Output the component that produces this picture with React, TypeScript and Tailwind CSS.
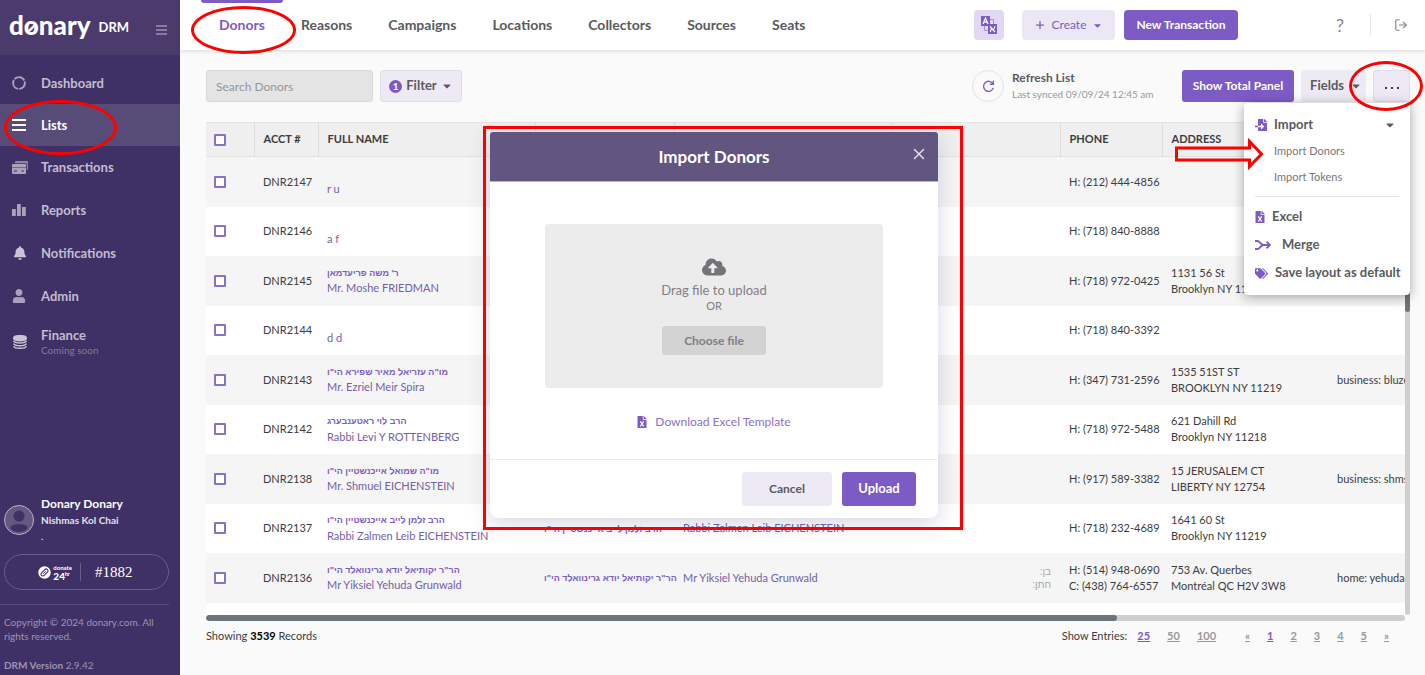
import React from "react";
import {
  FaBell,
  FaCaretDown,
  FaCloudUploadAlt,
  FaDatabase,
  FaFileExcel,
  FaFileImport,
  FaTags,
  FaUser,
} from "react-icons/fa";
import { LogOut, Plus, X } from "lucide-react";

type Donor = {
  id: string;
  hebrew?: string;
  name: string;
  splitName?: boolean;
  relations?: string[];
  phones: string[];
  address?: string[];
  email?: string;
};

const donors: Donor[] = [
  { id: "DNR2147", name: "r u", phones: ["H: (212) 444-4856"] },
  { id: "DNR2146", name: "a f", phones: ["H: (718) 840-8888"] },
  {
    id: "DNR2145",
    hebrew: "ר' משה פריעדמאן",
    name: "Mr. Moshe FRIEDMAN",
    phones: ["H: (718) 972-0425"],
    address: ["1131 56 St", "Brooklyn NY 11219"],
  },
  { id: "DNR2144", name: "d d", phones: ["H: (718) 840-3392"] },
  {
    id: "DNR2143",
    hebrew: "מו\"ה עזריאל מאיר שפירא הי\"ו",
    name: "Mr. Ezriel Meir Spira",
    phones: ["H: (347) 731-2596"],
    address: ["1535 51ST ST", "BROOKLYN NY 11219"],
    email: "business: bluzer@donary.com",
  },
  {
    id: "DNR2142",
    hebrew: "הרב לוי ראטענבערג",
    name: "Rabbi Levi Y ROTTENBERG",
    phones: ["H: (718) 972-5488"],
    address: ["621 Dahill Rd", "Brooklyn NY 11218"],
  },
  {
    id: "DNR2138",
    hebrew: "מו\"ה שמואל אייכנשטיין הי\"ו",
    name: "Mr. Shmuel EICHENSTEIN",
    phones: ["H: (917) 589-3382"],
    address: ["15 JERUSALEM CT", "LIBERTY NY 12754"],
    email: "business: shmself@donary.com",
  },
  {
    id: "DNR2137",
    hebrew: "הרב זלמן לייב אייכנשטיין הי\"ו",
    name: "Rabbi Zalmen Leib EICHENSTEIN",
    splitName: true,
    phones: ["H: (718) 232-4689"],
    address: ["1641 60 St", "Brooklyn NY 11219"],
  },
  {
    id: "DNR2136",
    hebrew: "הר\"ר יקותיאל יודא גרינוואלד הי\"ו",
    name: "Mr Yiksiel Yehuda Grunwald",
    splitName: true,
    relations: ["בן:", "חתן:"],
    phones: ["H: (514) 948-0690", "C: (438) 764-6557"],
    address: ["753 Av. Querbes", "Montréal QC H2V 3W8"],
    email: "home: yehuda@donary.com",
  },
];

const tabs = ["Donors", "Reasons", "Campaigns", "Locations", "Collectors", "Sources", "Seats"];

function DashboardIcon() {
  return (
    <svg viewBox="0 0 14 14" className="size-[14px]" fill="none" stroke="currentColor" strokeWidth="1.900">
      <circle cx="7" cy="7" r="5.900" strokeDasharray="11.300 1.057" strokeDashoffset="2.500" />
    </svg>
  );
}

function CardsIcon() {
  return (
    <svg viewBox="0 0 16 13" className="h-[13px] w-4" fill="currentColor">
      <path d="M4 0h11a1 1 0 0 1 1 1v8h-1.200V3.200a1 1 0 0 0-1-1H3V1a1 1 0 0 1 1-1z" opacity=".75" />
      <path d="M1 3h12a1 1 0 0 1 1 1v8a1 1 0 0 1-1 1H1a1 1 0 0 1-1-1V4a1 1 0 0 1 1-1z" />
      <path d="M0 6.500h14" stroke="#3f3065" strokeWidth=".5" />
      <path d="M2 10h3M9.500 10h2.500" stroke="#3f3065" strokeWidth="1" />
    </svg>
  );
}

function BarsChartIcon() {
  return (
    <svg viewBox="0 0 14 12" className="h-3 w-[14px]" fill="currentColor">
      <rect x="0" y="5" width="3.800" height="7" />
      <rect x="5" y="0" width="3.800" height="12" />
      <rect x="10" y="3" width="3.800" height="9" />
    </svg>
  );
}

function DatabaseIcon() {
  return (
    <svg viewBox="0 0 14 14" className="ml-px size-[14px] text-[#c9c4d6]" fill="none" stroke="currentColor" strokeWidth="1.500">
      <ellipse cx="7" cy="3.200" rx="6.300" ry="2.500" fill="currentColor" />
      <path d="M.7 5.800c1 3 11.600 3 12.600 0M.7 8.500c1 3 11.600 3 12.600 0M.7 11.200c1 2.700 11.600 2.700 12.600 0" />
    </svg>
  );
}

function MergeIcon() {
  return (
    <svg viewBox="0 0 16 10" className="h-[10px] w-4" fill="none" stroke="currentColor" strokeWidth="1.900">
      <path d="M0 1h2.500C5 1 5.500 5 8.500 5H15M0 9h2.500C5 9 5.500 5 8.500 5" />
      <path d="M11.500 1.600 15 5l-3.500 3.400" />
    </svg>
  );
}

function LanguageIcon() {
  return (
    <svg viewBox="0 0 16 18" className="h-[18px] w-4">
      <rect width="9" height="10" fill="#7c5cc4" />
      <rect x="7" y="8" width="9" height="10" fill="#7c5cc4" />
      <path d="M9 3.500h3.500V8M7 14.500H3.500V10" fill="none" stroke="#a78fdc" strokeWidth="1" />
      <path d="M2 8 4.500 2 7 8M3 6.200h3" fill="none" stroke="#fff" strokeWidth="1.200" />
      <path
        d="M9 10.500l5 5.500M13.800 10.300c0 1.700-.4 2.300-1.300 2.900M9.400 16c0-2 .3-2.500 1.400-3.300"
        fill="none"
        stroke="#fff"
        strokeWidth="1.200"
      />
    </svg>
  );
}

function RefreshIcon() {
  return (
    <svg viewBox="0 0 14 14" className="size-[13px]" fill="none" stroke="#7c5cc4" strokeWidth="1.500">
      <path d="M11.800 4.200A5.400 5.400 0 1 0 12.200 8.500" />
      <path d="M12.200.8v3.700H8.500" />
    </svg>
  );
}

function CoinMark() {
  return (
    <svg viewBox="0 0 14 14" className="size-[13px]">
      <circle cx="7" cy="7" r="6.700" fill="#fff" />
      <rect
        x="2.500"
        y="5"
        width="9"
        height="4"
        rx="2"
        transform="rotate(-45 7 7)"
        fill="none"
        stroke="#3f3065"
        strokeWidth="1.200"
      />
      <path d="M5.500 8.500l3-3" stroke="#3f3065" strokeWidth="1" />
    </svg>
  );
}

function NavItem({
  icon,
  label,
  note,
  active,
}: {
  icon: React.ReactNode;
  label: string;
  note?: string;
  active?: boolean;
}) {
  return (
    <a
      href="#"
      className={
        active
          ? "flex h-[42px] items-center bg-[#574b78] px-3 text-white"
          : "flex h-[42px] items-center px-3 text-[#c3bdd1]"
      }
    >
      <span className={active ? "flex w-[29px] items-center" : "flex w-[29px] items-center text-[#aaa2bd]"}>{icon}</span>
      <span className="text-[13px] leading-4 font-bold">
        {label}
        {note && <span className="block text-[10px] leading-[14px] font-normal text-[#8379a0]">{note}</span>}
      </span>
    </a>
  );
}

function Sidebar() {
  return (
    <aside className="flex w-[180px] shrink-0 flex-col bg-[#3f3065]">
      <div className="flex h-[55px] items-center bg-[#4b3b6d] px-[9px] text-white">
        <span className="relative pb-[5px] text-[26px] leading-8 font-black">
          donary
          <svg viewBox="0 0 10 10" className="absolute top-[14px] left-[19px] size-[9px]" fill="none" stroke="#fff">
            <path d="M1 9 9 1" strokeWidth="2.500" />
          </svg>
        </span>
        <span className="ml-2 text-[13px] font-bold">DRM</span>
        <button aria-label="Collapse menu" className="ml-auto mr-1 text-[#9b92ae]">
          <svg viewBox="0 0 11 10" className="mt-1 h-[10px] w-[11px]" stroke="currentColor" strokeWidth="1.500">
            <path d="M0 1h11M0 5h11M0 9h11" />
          </svg>
        </button>
      </div>
      <nav className="flex flex-col pt-[7px]">
        <NavItem icon={<DashboardIcon />} label="Dashboard" />
        <NavItem
          icon={
            <svg viewBox="0 0 14 12" className="h-3 w-[14px]" stroke="currentColor" strokeWidth="2">
              <path d="M0 1h14M0 6h14M0 11h14" />
            </svg>
          }
          label="Lists"
          active
        />
        <div className="flex flex-col gap-px">
          <NavItem icon={<CardsIcon />} label="Transactions" />
          <NavItem icon={<BarsChartIcon />} label="Reports" />
          <NavItem icon={<FaBell className="ml-px size-[14px] text-[#c9c4d6]" />} label="Notifications" />
          <NavItem icon={<FaUser className="size-[14px]" />} label="Admin" />
        </div>
        <div className="pt-1">
          <NavItem icon={<DatabaseIcon />} label="Finance" note="Coming soon" />
        </div>
      </nav>
      <div className="mt-auto px-1 pb-[3px]">
        <div className="flex items-center gap-[7px]">
          <span className="relative flex size-[30px] shrink-0 items-center justify-center overflow-hidden rounded-full border border-[#b9b3c8] bg-[#65577f] text-[#3f3065]">
            <svg viewBox="0 0 28 28" className="size-7" fill="currentColor">
              <circle cx="14" cy="10" r="5.500" />
              <path d="M5.500 22c0-3 4-3.800 8.500-3.800s8.500.8 8.500 3.800c-2 3-5 4-8.500 4s-6.500-1-8.500-4z" />
            </svg>
          </span>
          <div className="text-white">
            <p className="text-[12px] leading-4 font-bold">Donary Donary</p>
            <p className="text-[10px] leading-4 font-bold text-[#e4e0ec]">Nishmas Kol Chai</p>
            <p className="text-[10px] leading-4">.</p>
          </div>
        </div>
        <div className="mt-2.5 mr-[7px] flex h-9 items-center rounded-full border border-[#6a5d88] text-white">
          <span className="flex w-[75px] items-center justify-end gap-0.5 pr-2">
            <CoinMark />
            <span className="flex flex-col">
              <span className="text-[6px] leading-[7px] font-bold">donate</span>
              <span className="flex items-start text-[10px] leading-[10px] font-black">
                24<span className="text-[5px] leading-[7px]">hr</span>
              </span>
            </span>
          </span>
          <span className="h-[18px] w-px bg-[#6a5d88]" />
          <span className="pl-3.5 font-['Liberation_Serif',serif] text-[15px]">#1882</span>
        </div>
        <div className="mt-3.5 -ml-1 mr-[7px] border-t border-[#594b78]" />
        <p className="mt-2.5 text-[10px] leading-[14px] text-[#9d94b3]">
          Copyright © 2024 donary.com. All
          <br />
          rights reserved.
        </p>
        <p className="mt-[15px] text-[10px] leading-[14px] text-[#9d94b3]">
          <b>DRM Version</b> 2.9.42
        </p>
      </div>
    </aside>
  );
}

function TopBar() {
  return (
    <header className="flex h-[50px] items-center bg-white pr-[17px] pl-[21px] shadow-[0_1px_4px_rgba(0,0,0,0.14)]">
      <nav className="flex self-stretch">
        {tabs.map((tab, i) => (
          <a
            key={tab}
            href="#"
            className={
              i === 0
                ? "relative flex items-center px-[18px] pb-0.5 text-[14px] font-bold text-[#7c5cc4] before:absolute before:inset-x-0 before:top-0 before:h-[3px] before:rounded-b-sm before:bg-[#7c5cc4]"
                : "flex items-center px-[18px] pb-0.5 text-[14px] font-bold text-[#5a5a60]"
            }
          >
            {tab}
          </a>
        ))}
      </nav>
      <div className="ml-auto flex items-center">
        <button aria-label="Switch language" className="flex size-[30px] items-center justify-center rounded-sm bg-[#e1d8f6]">
          <LanguageIcon />
        </button>
        <button className="ml-[18px] flex h-[30px] w-[93px] items-center justify-center gap-1.5 rounded-sm bg-[#ebe7f4] text-[12px] text-[#7c5cc4]">
          <Plus className="size-3" strokeWidth={2.5} />
          Create
          <FaCaretDown className="size-[11px]" />
        </button>
        <button className="ml-[9px] h-[30px] w-[114px] rounded-sm bg-[#7c5cc4] text-[12px] font-bold text-white">
          New Transaction
        </button>
        <button aria-label="Help" className="ml-[97px] w-[10px] text-[18px] text-[#86868c]">
          ?
        </button>
        <span className="ml-[25px] h-[22px] w-px bg-[#e6e6e6]" />
        <button aria-label="Log out" className="ml-[23px] text-[#86868c]">
          <LogOut className="size-[14px]" strokeWidth={2} />
        </button>
      </div>
    </header>
  );
}

function ActionsMenu() {
  return (
    <div className="absolute top-full right-0 z-20 mt-px w-[166px] rounded-[4px] bg-white px-[11px] py-2 text-[13px] font-bold text-[#5a5a60] shadow-[0_2px_12px_rgba(0,0,0,0.35)]">
      <button className="flex h-[27px] w-full items-center">
        <FaFileImport className="size-3 text-[#7c5cc4]" />
        <span className="ml-[7px]">Import</span>
        <FaCaretDown className="mr-[3px] ml-auto size-3" />
      </button>
      <div className="mb-1.5 border-b border-[#e4e4e4] pb-1.5">
        <a href="#" className="block pl-[19px] text-[11px] leading-[26px] font-normal text-[#77777d]">
          Import Donors
        </a>
        <a href="#" className="block pl-[19px] text-[11px] leading-[26px] font-normal text-[#77777d]">
          Import Tokens
        </a>
      </div>
      <button className="flex h-7 w-full items-center gap-[7px]">
        <FaFileExcel className="h-3 w-[10px] text-[#7c5cc4]" />
        Excel
      </button>
      <button className="flex h-7 w-full items-center gap-[11px] text-left">
        <span className="text-[#7c5cc4]">
          <MergeIcon />
        </span>
        Merge
      </button>
      <button className="flex h-7 w-full items-center gap-[7px] whitespace-nowrap">
        <FaTags className="size-[13px] shrink-0 text-[#7c5cc4]" />
        Save layout as default
      </button>
    </div>
  );
}

function Toolbar() {
  return (
    <div className="flex h-8 items-center">
      <input
        type="text"
        aria-label="Search Donors"
        placeholder="Search Donors"
        className="h-8 w-[167px] rounded-[3px] border border-[#d9d9d9] bg-[#e4e4e4] px-[9px] text-[12px] placeholder:text-[#96969b]"
      />
      <button className="ml-[7px] flex h-8 w-[82px] items-center justify-center rounded-[3px] border border-[#e0dde6] bg-[#ede9f5] text-[13px] font-bold text-[#5a5a60]">
        <span className="mr-1 flex size-[13px] items-center justify-center rounded-full bg-[#7c5cc4] text-[10px] text-white">1</span>
        Filter
        <FaCaretDown className="ml-1 size-3" />
      </button>
      <div className="ml-auto flex items-center">
        <button aria-label="Refresh" className="flex size-8 items-center justify-center rounded-full border border-[#e2e2e2]">
          <RefreshIcon />
        </button>
        <div className="ml-2 w-[170px]">
          <p className="text-[12px] leading-4 font-bold text-[#5a5a60]">Refresh List</p>
          <p className="text-[10px] leading-4 text-[#98989d]">Last synced 09/09/24 12:45 am</p>
        </div>
        <button className="h-8 w-[112px] rounded-[3px] bg-[#7c5cc4] text-[12px] font-bold text-white">Show Total Panel</button>
        <button className="ml-[7px] flex h-8 w-[65px] items-center justify-end gap-1.5 rounded-[3px] bg-[#ede9f5] pr-1 text-[13px] font-bold text-[#5a5a60]">
          Fields
          <FaCaretDown className="size-3" />
        </button>
        <div className="relative ml-[7px]">
          <button
            aria-label="More actions"
            className="flex h-8 w-[37px] items-center justify-center gap-[4px] rounded-[3px] border border-[#e0dde6] bg-[#ede9f5] pt-1"
          >
            <span className="size-[2px] bg-[#3a3a40]" />
            <span className="size-[2px] bg-[#3a3a40]" />
            <span className="size-[2px] bg-[#3a3a40]" />
          </button>
          <ActionsMenu />
        </div>
      </div>
    </div>
  );
}

function Check({ label }: { label: string }) {
  return (
    <input
      type="checkbox"
      aria-label={label}
      className="ml-2 block size-3 appearance-none rounded-[1px] border-2 border-[#8a6fcb] bg-white"
    />
  );
}

function HebrewText({ children }: { children: string }) {
  return (
    <span
      dir="rtl"
      lang="he"
      className="font-['Liberation_Sans',sans-serif] text-[9px] font-bold whitespace-nowrap text-[#7c5cc4]"
    >
      {children}
    </span>
  );
}

function DonorTable() {
  const head = "border-r border-[#dedede] px-[9px] text-left text-[11px] font-bold text-[#3c3c40]";
  const cell = "px-[9px] py-0 text-[11px] leading-4";
  return (
    <div>
      <div className="flex">
        <div className="min-w-0 flex-1 overflow-hidden bg-white pb-3">
          <table className="w-[1582px] table-fixed border-collapse text-[#3c3c40]">
            <colgroup>
              <col className="w-[48px]" />
              <col className="w-[64px]" />
              <col className="w-[217px]" />
              <col className="w-[139px]" />
              <col className="w-[218px]" />
              <col className="w-[168px]" />
              <col className="w-[102px]" />
              <col className="w-[166px]" />
              <col />
            </colgroup>
            <thead>
              <tr className="h-[34px] border-y border-[#e2e2e2] bg-[#efefef]">
                <th className="border-r border-[#dedede] p-0">
                  <Check label="Select all donors" />
                </th>
                <th className={head}>ACCT #</th>
                <th className={head}>FULL NAME</th>
                <th className={head} />
                <th className={head} />
                <th className={head} />
                <th className={head}>PHONE</th>
                <th className={head}>ADDRESS</th>
                <th className={head} />
              </tr>
            </thead>
            <tbody>
              {donors.map((d) => (
                <tr key={d.id} className="odd:h-[50px] odd:bg-[#f5f5f5] even:h-[49px] even:bg-white">
                  <td className="p-0">
                    <Check label={`Select ${d.id}`} />
                  </td>
                  <td className={cell}>{d.id}</td>
                  <td className={cell}>
                    <div className="flex h-[15px] items-center">{d.hebrew && <HebrewText>{d.hebrew}</HebrewText>}</div>
                    <a href="#" className="block whitespace-nowrap text-[#7460a8]">
                      {d.name}
                    </a>
                  </td>
                  <td className={cell}>{d.splitName && d.hebrew && <HebrewText>{d.hebrew}</HebrewText>}</td>
                  <td className={cell}>{d.splitName && <span className="text-[#7460a8]">{d.name}</span>}</td>
                  <td className={cell}>
                    {d.relations?.map((r) => (
                      <div
                        key={r}
                        dir="rtl"
                        className="font-['Liberation_Sans',sans-serif] text-[10px] leading-[13px] text-[#a5a5a9]"
                      >
                        {r}
                      </div>
                    ))}
                  </td>
                  <td className={cell}>
                    {d.phones.map((p) => (
                      <div key={p} className="whitespace-nowrap">
                        {p}
                      </div>
                    ))}
                  </td>
                  <td className={cell}>
                    {d.address?.map((a) => (
                      <div key={a}>{a}</div>
                    ))}
                  </td>
                  <td className={cell}>{d.email}</td>
                </tr>
              ))}
            </tbody>
          </table>
        </div>
        <div className="mt-[34px] w-[5px] rounded-full bg-[#cfcfcf]">
          <div className="h-[156px] rounded-full bg-[#6c757d]" />
        </div>
      </div>
      <div className="mr-[5px] h-1.5 overflow-hidden rounded-full bg-[#cfcfcf]">
        <div className="h-full w-[76%] rounded-full bg-[#6c757d]" />
      </div>
    </div>
  );
}

function Footer() {
  const page = "font-bold text-[#98989d] underline";
  const current = "font-bold text-[#7c5cc4] underline";
  return (
    <div className="mt-[7px] flex items-center justify-between pr-[21px] text-[11px] leading-4 text-[#3c3c40]">
      <p>
        Showing <b className="text-black">3539</b> Records
      </p>
      <div className="flex items-center">
        <span className="mr-[10px]">Show Entries:</span>
        <span className="flex gap-[17px]">
          <a href="#" className={current}>25</a>
          <a href="#" className={page}>50</a>
          <a href="#" className={page}>100</a>
        </span>
        <span className="ml-[29px] flex gap-[17px]">
          <a href="#" className={page}>«</a>
          <a href="#" className={current}>1</a>
          <a href="#" className={page}>2</a>
          <a href="#" className={page}>3</a>
          <a href="#" className={page}>4</a>
          <a href="#" className={page}>5</a>
          <a href="#" className={page}>»</a>
        </span>
      </div>
    </div>
  );
}

function ImportModal() {
  return (
    <div
      role="dialog"
      aria-label="Import Donors"
      className="absolute top-[126px] left-[303px] z-10 w-[480px] border-[3px] border-[#ff0000] pt-[3px] pr-[22px] pb-[9px] pl-1"
    >
      <div className="overflow-hidden rounded-t-[3px] rounded-b-[8px] bg-white shadow-[0_6px_22px_rgba(60,50,110,0.2)]">
        <div className="relative flex h-[50px] items-center justify-center border-b border-[#b9aed6] bg-[#62557f] text-white">
          <h2 className="text-[17px] font-bold">Import Donors</h2>
          <button aria-label="Close" className="absolute top-[13px] right-[10px] text-[#e6e2ee]">
            <X className="size-[18px]" strokeWidth={2} />
          </button>
        </div>
        <div className="flex flex-col items-center px-[55px] pt-[42px] pb-[28px]">
          <div className="flex w-full flex-col items-center rounded-[4px] bg-[#ececec] pt-[32px] pb-[33px] text-[#808084]">
            <FaCloudUploadAlt className="h-[22px] w-6 text-[#747478]" />
            <p className="mt-[3px] text-[13px] leading-[18px]">Drag file to upload</p>
            <p className="text-[11px] leading-[14px]">OR</p>
            <button className="mt-[13px] h-[29px] w-[104px] rounded-[3px] bg-[#d3d3d3] text-[12px] font-bold">Choose file</button>
          </div>
          <a href="#" className="mt-[25px] flex items-center gap-2 text-[12px] leading-[18px] text-[#8b6fcc]">
            <FaFileExcel className="h-3 w-[10px] text-[#7c5cc4]" />
            Download Excel Template
          </a>
        </div>
        <div className="flex justify-end gap-[10px] border-t border-[#ebebeb] pt-3 pr-[22px] pb-3 text-[12px] font-bold">
          <button className="h-[34px] w-[90px] rounded-[3px] bg-[#ede9f5] text-[#5a5a60]">Cancel</button>
          <button className="h-[34px] w-[74px] rounded-[3px] bg-[#7c5cc4] text-[13px] text-white">Upload</button>
        </div>
      </div>
    </div>
  );
}

const ring = "pointer-events-none absolute z-30 rounded-[50%] border-[3px] border-[#ff0000]";

export default function App() {
  return (
    <div className="relative flex min-h-screen overflow-hidden bg-[#fafafa] font-[Lato,'Liberation_Sans',sans-serif]">
      <Sidebar />
      <div className="relative flex min-w-0 flex-1 flex-col">
        <TopBar />
        <main className="flex flex-1 flex-col pt-5 pr-[15px] pl-[26px]">
          <Toolbar />
          <div className="mt-5">
            <DonorTable />
          </div>
          <Footer />
        </main>
        <ImportModal />
        <div className={`${ring} top-[6px] left-[11px] h-12 w-[105px]`} />
        <div className={`${ring} top-[61px] right-[2px] h-[50px] w-[74px]`} />
        <svg viewBox="0 0 92 34" className="pointer-events-none absolute top-[137px] right-[160px] z-30 h-[34px] w-[92px]">
          <path d="M3.500 11h73V4.500L88.500 17 76.500 29.500V23h-73z" fill="none" stroke="#ff0000" strokeWidth="3" />
        </svg>
      </div>
      <div className={`${ring} top-[100px] left-1 h-[55px] w-[113px]`} />
    </div>
  );
}
